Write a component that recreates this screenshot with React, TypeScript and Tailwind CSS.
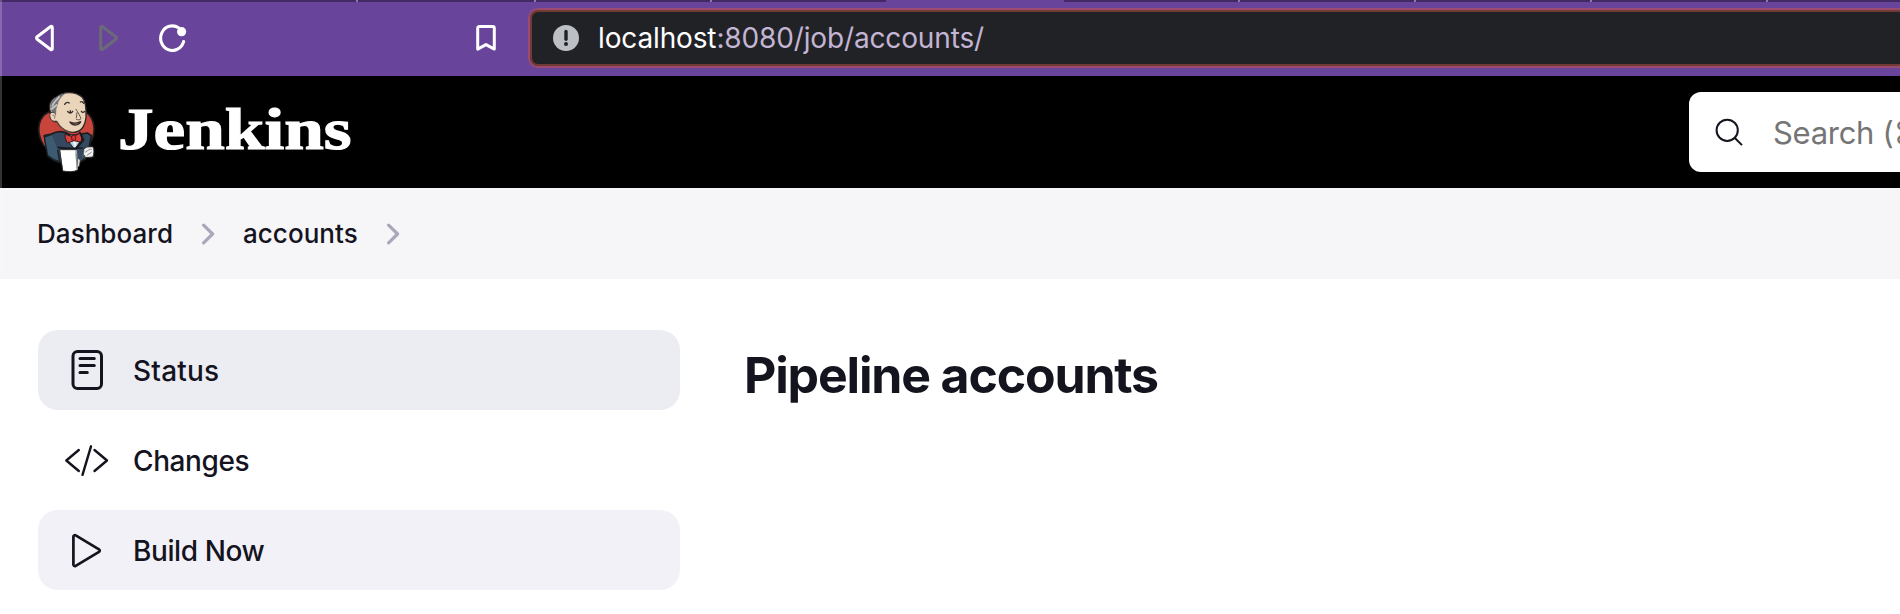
import type { ReactNode } from "react";

const tabs = [
  { width: "w-[358px]", active: false },
  { width: "w-[178px]", active: false },
  { width: "w-[176px]", active: false },
  { width: "w-[174px]", active: false },
  { width: "w-[178px]", active: true },
  { width: "w-[176px]", active: false },
  { width: "w-[176px]", active: false },
  { width: "w-[176px]", active: false },
  { width: "w-[176px]", active: false },
  { width: "w-[132px]", active: false },
];

function TabStrip() {
  return (
    <div className="flex h-[2px] w-full overflow-hidden">
      {tabs.map((tab, i) => (
        <div
          key={i}
          className={`${tab.width} shrink-0 ${tab.active ? "bg-[#68449a]" : "bg-[#432966]"} ${
            [0, 1, 2, 5, 6, 7, 8].includes(i) ? "border-r-2 border-[#8d7a9f]" : ""
          }`}
        />
      ))}
    </div>
  );
}

function BrowserBar() {
  return (
    <div className="flex h-[74px] items-center bg-[#68449a] pb-[2px] pl-[34px]">
      <svg className="h-[28px] w-[21px] shrink-0" viewBox="0 0 21 28" fill="none" stroke="#fff" strokeWidth="3" strokeLinejoin="round">
        <path d="M18.3 3.2v21.6c0 .9-1 1.2-1.6.7L3.2 15.2c-.9-.7-.9-1.7 0-2.4L16.7 2.5c.6-.5 1.6-.2 1.6.7Z" />
      </svg>
      <svg className="ml-[43px] h-[28px] w-[21px] shrink-0" viewBox="0 0 21 28" fill="none" stroke="#6c6a79" strokeWidth="3" strokeLinejoin="round">
        <path d="M2.7 3.2v21.6c0 .9 1 1.2 1.6.7l13.5-10.3c.9-.7.9-1.7 0-2.4L4.3 2.5c-.6-.5-1.6-.2-1.6.7Z" />
      </svg>
      <svg className="ml-[39px] h-[28px] w-[30px] shrink-0" viewBox="0 0 30 28" fill="none">
        <path d="M20.6 3.8A11.7 12.3 0 1 0 25.6 17.6" stroke="#fff" strokeWidth="3.1" strokeLinecap="round" />
        <circle cx="23.6" cy="7.7" r="4.6" fill="#fff" />
      </svg>
      <svg className="ml-[287px] h-[28px] w-[22px] shrink-0" viewBox="0 0 22 28" fill="none" stroke="#fff" strokeWidth="3" strokeLinejoin="round">
        <path d="M2.7 4.2c0-1 .6-1.7 1.6-1.7h13.4c1 0 1.6.7 1.6 1.7v20.9L11 20.6l-8.3 4.5Z" />
      </svg>
      <div className="ml-[31px] flex h-[60px] grow rounded-l-[10px] border-y-2 border-l-2 border-[#9b4a70]">
        <div className="flex grow items-center rounded-l-[8px] border-y-2 border-l-2 border-[#713a33] bg-[#212226] pl-[20px]">
          <svg className="h-[28px] w-[28px] shrink-0" viewBox="0 0 28 28">
            <circle cx="14" cy="14" r="13" fill="#bcc0c4" />
            <path d="M14 7.4v7.8" stroke="#212226" strokeWidth="3.4" strokeLinecap="round" />
            <circle cx="14" cy="20" r="2" fill="#212226" />
          </svg>
          <span className="ml-[18px] whitespace-nowrap text-[28px] leading-[36px] tracking-[-0.14px] text-[#c3b5d3]">
            <span className="text-white">localhost</span>:8080/job/accounts/
          </span>
        </div>
      </div>
    </div>
  );
}

function JenkinsLogo() {
  return (
    <svg className="h-[94px] w-[80px] shrink-0" viewBox="0 0 240 282" strokeLinejoin="round" strokeLinecap="round">
      <path d="M55 82C26 96 19 134 34 168c5 12 11 19 18 24l122-12c20-18 23-54 11-79-6-12-14-18-24-22Z" fill="#c9453b" stroke="#231f20" strokeWidth="5" />
      <path d="M64 147c22-12 42-8 60 5l48-8 12 8-9 49-8 20-18 11-40 4c-23-2-41-9-55-23L43 152Z" fill="#34495f" stroke="#1b1c20" strokeWidth="5" />
      <path d="M65 148 43 156l10 56 18 12 18 6-6-34" fill="#3c5b70" stroke="#1d2228" strokeWidth="4" />
      <path d="m110 162 24 32 22-33-12-13-26 3Z" fill="#b5d3df" stroke="#231f20" strokeWidth="3" />
      <path d="m127 165 8 27 7-28Z" fill="#ebf3f3" />
      <path d="M69 88C53 77 54 46 79 36c22-18 56-17 77 0 13 13 13 37 12 61-3 25-15 44-38 45-24 0-43-18-49-32-16 3-21-18-12-22Z" fill="#ead5bb" stroke="#302b2b" strokeWidth="4" />
      <path d="M66 82c-9-19-6-36 15-47 8-6 17-9 24-9-11 9-20 20-21 30l-5 16-1 20Z" fill="#74757a" />
      <path d="M67 63c5-14 13-17 20-27M65 72l15-12" fill="none" stroke="#c6c6c6" strokeWidth="5" />
      <path d="M72 82c-12-3-15 8-11 17 3 8 10 12 17 9" fill="#ead5bb" stroke="#3d3130" strokeWidth="3" />
      <path d="M69 91c5-1 7 3 5 9M80 109c10 17 20 26 37 32" fill="none" stroke="#735d4f" strokeWidth="2.5" />
      <path d="M104 58c3-6 9-7 14-4M151 51c4-2 8-1 10 4M113 79c5 7 11 6 15 0M121 84v-7M154 79c3 4 7 4 10 0" fill="none" stroke="#352e2d" strokeWidth="4" />
      <path d="M138 73c7 10 12 20 15 28-3 5-9 4-14 2M141 83l-2 15" fill="none" stroke="#66564b" strokeWidth="3" />
      <path d="M120 111c11 5 22 4 32-1-5 11-22 15-32 1Z" fill="#b68e7e" stroke="#392d2b" strokeWidth="4" />
      <path d="m106 148 23 8 22-12 5 8-3 20-21-5-20 7-6-14Z" fill="#dd3f3c" stroke="#3a1b1d" strokeWidth="3" />
      <rect x="125" y="151" width="12" height="15" rx="4" fill="#d53435" stroke="#61191d" strokeWidth="3" />
      <path d="M150 143 160 165 137 192" fill="none" stroke="#171b1d" strokeWidth="6" />
      <path d="M85 187c18 4 44 4 71 2" fill="none" stroke="#15191d" strokeWidth="5" />
      <path d="m161 193 9-7 18-1c5 5 5 19 1 31l-22 2-6-9Z" fill="#f1f0f1" stroke="#2c2b2b" strokeWidth="3" />
      <path d="M167 201c10-7 12-10 18-8M171 211l13-9M162 196l-3 18" fill="none" stroke="#777" strokeWidth="2.5" />
      <path d="m145 220 6 5-3 18-8 7" fill="#ddd" stroke="#333" strokeWidth="2" />
      <path d="M90 194h49c-2 21 2 38 3 62-12 5-27 5-43 2Z" fill="#fff" stroke="#2c2c2d" strokeWidth="3" />
      <path d="M139 196c4 18-1 42 3 56" fill="none" stroke="#b3b3b5" strokeWidth="3" />
    </svg>
  );
}

function Header() {
  return (
    <header className="flex h-[112px] justify-between bg-black pl-[30px]">
      <div className="flex pt-[9px]">
        <JenkinsLogo />
        <span className="ml-[8px] mt-[8px] origin-left scale-x-[1.187] font-['Liberation_Serif',serif] text-[60px] font-bold leading-[72px] text-white [-webkit-text-stroke:1.2px_white]">
          Jenkins
        </span>
      </div>
      <div className="mt-[16px] flex h-[80px] w-[211px] items-center overflow-hidden rounded-l-[12px] bg-white pl-[26px]">
        <svg className="h-[28px] w-[28px] shrink-0" viewBox="0 0 28 28" fill="none" stroke="#14141f" strokeWidth="2">
          <circle cx="12.2" cy="12.3" r="10.6" />
          <path d="m19.6 19.7 7.4 7.4" />
        </svg>
        <span className="ml-[30px] mt-px whitespace-nowrap text-[31px] leading-[40px] tracking-[-0.3px] text-[#757575]">Search (⌘+K)</span>
      </div>
    </header>
  );
}

function Chevron() {
  return (
    <svg className="h-[22px] w-[14px] shrink-0" viewBox="0 0 14 22" fill="none" stroke="#a9a8ba" strokeWidth="3.2" strokeLinecap="round" strokeLinejoin="round">
      <path d="m2.6 2.2 9 8.8-9 8.8" />
    </svg>
  );
}

function Breadcrumbs() {
  return (
    <nav className="flex h-[91px] items-center bg-[#f6f6f9] pl-[37px] text-[26px] font-medium leading-[34px] text-[#14141f]">
      <span className="w-[164px] shrink-0 tracking-[0.05px]">Dashboard</span>
      <Chevron />
      <span className="ml-[28px] w-[143px] shrink-0 tracking-[0.05px]">accounts</span>
      <Chevron />
    </nav>
  );
}

function Task({ icon, label, className = "", tracking = "tracking-[-0.4px]" }: { icon: ReactNode; label: string; className?: string; tracking?: string }) {
  return (
    <a className={`flex h-[80px] items-center rounded-[20px] pl-[26px] pt-[2px] ${className}`}>
      <span className="flex w-[46px] justify-center">{icon}</span>
      <span className={`ml-[23px] text-[28px] font-medium leading-[36px] ${tracking}`}>{label}</span>
    </a>
  );
}

const statusIcon = (
  <svg className="h-[42px] w-[34px]" viewBox="0 0 34 42" fill="none" stroke="#14141f" strokeWidth="3" strokeLinecap="round">
    <rect x="3" y="1.5" width="28.500" height="37" rx="4.500" />
    <path d="M10 8.500h14.300M10 15.500h14.300M10 22.500h7.300" />
  </svg>
);

const changesIcon = (
  <svg className="h-[34px] w-[46px]" viewBox="0 0 46 34" fill="none" stroke="#14141f" strokeWidth="2.4" strokeLinecap="round" strokeLinejoin="round">
    <path d="M14.800 6 2.300 16.500 14.800 27M30.500 6 43 16.500 30.500 27M27 2.300l-8.500 28.500" />
  </svg>
);

const playIcon = (
  <svg className="h-[36px] w-[32px]" viewBox="0 0 32 36" fill="none" stroke="#14141f" strokeWidth="2.7" strokeLinejoin="round">
    <path d="M2.400 3.700v27.800c0 1.300 1.200 2 2.300 1.300l23.300-13.900c1-.6 1-2 0-2.600L4.700 2.400C3.600 1.700 2.400 2.400 2.400 3.700Z" />
  </svg>
);

export default function App() {
  return (
    <div className="relative h-[614px] w-full overflow-hidden bg-white font-['Inter','DejaVu_Sans',sans-serif] text-[#14141f]">
      <TabStrip />
      <BrowserBar />
      <Header />
      <Breadcrumbs />
      <main className="flex pl-[38px] pt-[51px]">
        <aside className="flex w-[642px] shrink-0 flex-col gap-[10px]">
          <Task icon={statusIcon} label="Status" className="bg-[#ecedf3]" tracking="tracking-[0.2px]" />
          <Task icon={changesIcon} label="Changes" />
          <Task icon={playIcon} label="Build Now" className="bg-[#f2f1f7]" />
        </aside>
        <h1 className="ml-[64px] mt-[14px] text-[50px] font-bold leading-[62px] tracking-[-1.17px]">Pipeline accounts</h1>
      </main>
      <div className="absolute left-0 top-0 h-[279px] w-[2px] bg-white/20" />
    </div>
  );
}
